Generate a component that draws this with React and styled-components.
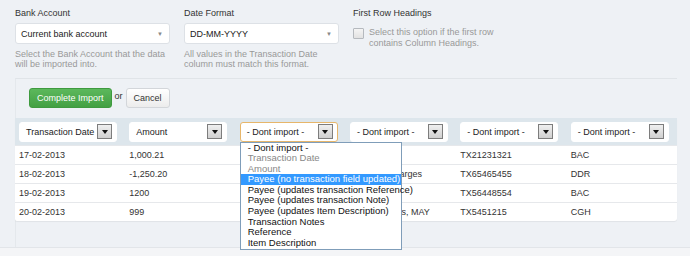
import styled, { createGlobalStyle, css } from 'styled-components';

const GlobalStyle = createGlobalStyle`
	html, body {
		margin: 0;
		padding: 0;
		background: #eef1f5;
	}
	body {
		font-family: "Liberation Sans", Arial, sans-serif;
		font-size: 9px;
		color: #333;
	}
`;

const Page = styled.div`
	width: 690px;
	height: 256px;
	overflow: hidden;

	display: flex;
	flex-direction: column;

	background: #eef1f5;
`;

const Content = styled.div`
	height: 247px;
	margin: 0 13px 0 15px;

	display: flex;
	flex-direction: column;
`;

const FormRow = styled.div`
	height: 78px;
	padding-top: 7px;
	box-sizing: border-box;
	flex-shrink: 0;

	display: flex;
	gap: 14px;
`;

const Field = styled.div`
	width: ${({ $width }) => $width || 155}px;

	display: flex;
	flex-direction: column;
`;

const Label = styled.div`
	height: 16px;

	font-size: 9px;
	line-height: 12px;
	color: #333;
`;

const SelectBox = styled.div`
	height: 19px;
	padding: 0 6px 0 5px;

	display: flex;
	justify-content: space-between;
	align-items: center;

	background: #fff;
	border: 1px solid #dde1e6;
	border-radius: 3px;
	font-size: 9px;
	color: #222;
`;

const Caret = styled.span`
	font-size: 6px;
	color: #888;
`;

const Help = styled.div`
	margin-top: 5px;

	font-size: 9px;
	line-height: 10px;
	color: #999;
`;

const CheckRow = styled.div`
	margin-top: 4px;

	display: flex;
	gap: 5px;
`;

const Check = styled.span`
	width: 9px;
	height: 9px;
	margin-top: 1px;
	flex-shrink: 0;

	background: linear-gradient(#f4f4f4, #e2e2e2);
	border: 1px solid #b5b9be;
	border-radius: 1px;
`;

const CheckText = styled.div`
	font-size: 9px;
	line-height: 11px;
	color: #999;
`;

const Lower = styled.div`
	flex: 1;

	display: flex;
	flex-direction: column;

	border-top: 1px solid #e0e4e8;
	border-left: 1px solid #e4e8ec;
`;

const Actions = styled.div`
	height: 39px;
	padding: 9px 0 0 13px;
	box-sizing: border-box;
	flex-shrink: 0;

	display: flex;
	align-items: flex-start;
	gap: 3px;
`;

const Button = styled.button`
	height: 20px;
	padding: 0 7px;

	font-family: inherit;
	font-size: 9px;
	border-radius: 3px;
	cursor: pointer;

	${({ $primary }) =>
		$primary
			? css`
					color: #fff;
					background: linear-gradient(#5cb85c, #43a043);
					border: 1px solid #3f9a3f;
			  `
			: css`
					color: #333;
					background: linear-gradient(#fff, #ececec);
					border: 1px solid #d3d6da;
			  `}
`;

const Or = styled.span`
	margin-top: 3px;

	font-size: 9px;
	color: #333;
`;

const TableWrap = styled.div`
	position: relative;
	width: 662px;
	margin-left: -1px;

	background: #fff;
	border-radius: 0 2px 3px 2px;
	box-shadow: 0 1px 1px rgba(0, 0, 0, 0.06);
`;

const Table = styled.table`
	width: 100%;
	table-layout: fixed;
	border-collapse: collapse;
`;

const HeadCell = styled.th`
	height: 27px;
	padding: 0 0 0 4px;

	background: #dde6ec;
	font-weight: normal;
	text-align: left;
`;

const HeadSelect = styled.div`
	position: relative;
	width: 98px;
	height: 20px;
	padding: 0 4px 0 6px;
	box-sizing: border-box;

	display: flex;
	justify-content: space-between;
	align-items: center;

	background: #fff;
	border: 1px solid ${({ $focus }) => ($focus ? '#e7b66a' : '#fff')};
	border-radius: 3px;
	font-size: 9px;
	color: #222;
`;

const DropButton = styled.span`
	width: 13px;
	height: 13px;

	display: flex;
	justify-content: center;
	align-items: center;

	background: linear-gradient(#f0f0f0, #cfcfcf);
	border: 1px solid #7d7d7d;

	&::after {
		content: '';
		border-left: 3.5px solid transparent;
		border-right: 3.5px solid transparent;
		border-top: 4px solid #111;
	}
`;

const Cell = styled.td`
	height: 18px;
	padding: 0 4px;

	border-top: 1px solid #e6e8eb;
	font-size: 9px;
	color: #333;
	white-space: nowrap;
	overflow: hidden;
`;

const DropList = styled.ul`
	position: absolute;
	top: 19px;
	left: -1px;
	width: 162px;
	margin: 0;
	padding: 0 0 1px;
	z-index: 2;

	list-style: none;
	background: #fff;
	border: 1px solid #7f9db9;
	box-sizing: border-box;
`;

const DropItem = styled.li`
	height: 10.6px;
	padding-left: 7px;

	font-size: 9.5px;
	line-height: 10.6px;
	color: ${({ $muted, $active }) => ($active ? '#fff' : $muted ? '#888' : '#111')};
	background: ${({ $active }) => ($active ? '#3399ff' : 'transparent')};
	white-space: nowrap;
`;

const Footer = styled.div`
	flex: 1;

	background: #f4f5f7;
	border-top: 1px solid #e2e5e9;
`;

const columns = [
	'Transaction Date',
	'Amount',
	'- Dont import -',
	'- Dont import -',
	'- Dont import -',
	'- Dont import -',
];

const rows = [
	['17-02-2013', '1,000.21', '', '', 'TX21231321', 'BAC'],
	['18-02-2013', '-1,250.20', '', 'Overdraft charges', 'TX65465455', 'DDR'],
	['19-02-2013', '1200', '', '', 'TX56448554', 'BAC'],
	['20-02-2013', '999', '', 'Council Rates, MAY', 'TX5451215', 'CGH'],
];

const options = [
	{ label: '- Dont import -' },
	{ label: 'Transaction Date', muted: true },
	{ label: 'Amount', muted: true },
	{ label: 'Payee (no transaction field updated)', active: true },
	{ label: 'Payee (updates transaction Reference)' },
	{ label: 'Payee (updates transaction Note)' },
	{ label: 'Payee (updates Item Description)' },
	{ label: 'Transaction Notes' },
	{ label: 'Reference' },
	{ label: 'Item Description' },
];

const App = () => {
	return (
		<>
			<GlobalStyle />
			<Page>
				<Content>
					<FormRow>
						<Field>
							<Label>Bank Account</Label>
							<SelectBox>
								<span>Current bank account</span>
								<Caret>▼</Caret>
							</SelectBox>
							<Help>
								Select the Bank Account that the data
								<br />
								will be imported into.
							</Help>
						</Field>
						<Field>
							<Label>Date Format</Label>
							<SelectBox>
								<span>DD-MM-YYYY</span>
								<Caret>▼</Caret>
							</SelectBox>
							<Help>
								All values in the Transaction Date
								<br />
								column must match this format.
							</Help>
						</Field>
						<Field $width={200}>
							<Label>First Row Headings</Label>
							<CheckRow>
								<Check />
								<CheckText>
									Select this option if the first row
									<br />
									contains Column Headings.
								</CheckText>
							</CheckRow>
						</Field>
					</FormRow>
					<Lower>
						<Actions>
							<Button $primary>Complete Import</Button>
							<Or>or</Or>
							<Button>Cancel</Button>
						</Actions>
						<TableWrap>
							<Table>
								<thead>
									<tr>
										{columns.map((name, i) => (
											<HeadCell key={i}>
												<HeadSelect $focus={i === 2}>
													<span>{name}</span>
													<DropButton />
													{i === 2 && (
														<DropList>
															{options.map((opt) => (
																<DropItem
																	key={opt.label}
																	$muted={opt.muted}
																	$active={opt.active}
																>
																	{opt.label}
																</DropItem>
															))}
														</DropList>
													)}
												</HeadSelect>
											</HeadCell>
										))}
									</tr>
								</thead>
								<tbody>
									{rows.map((row, r) => (
										<tr key={r}>
											{row.map((value, c) => (
												<Cell key={c}>{value}</Cell>
											))}
										</tr>
									))}
								</tbody>
							</Table>
						</TableWrap>
					</Lower>
				</Content>
				<Footer />
			</Page>
		</>
	);
};

export default App;
